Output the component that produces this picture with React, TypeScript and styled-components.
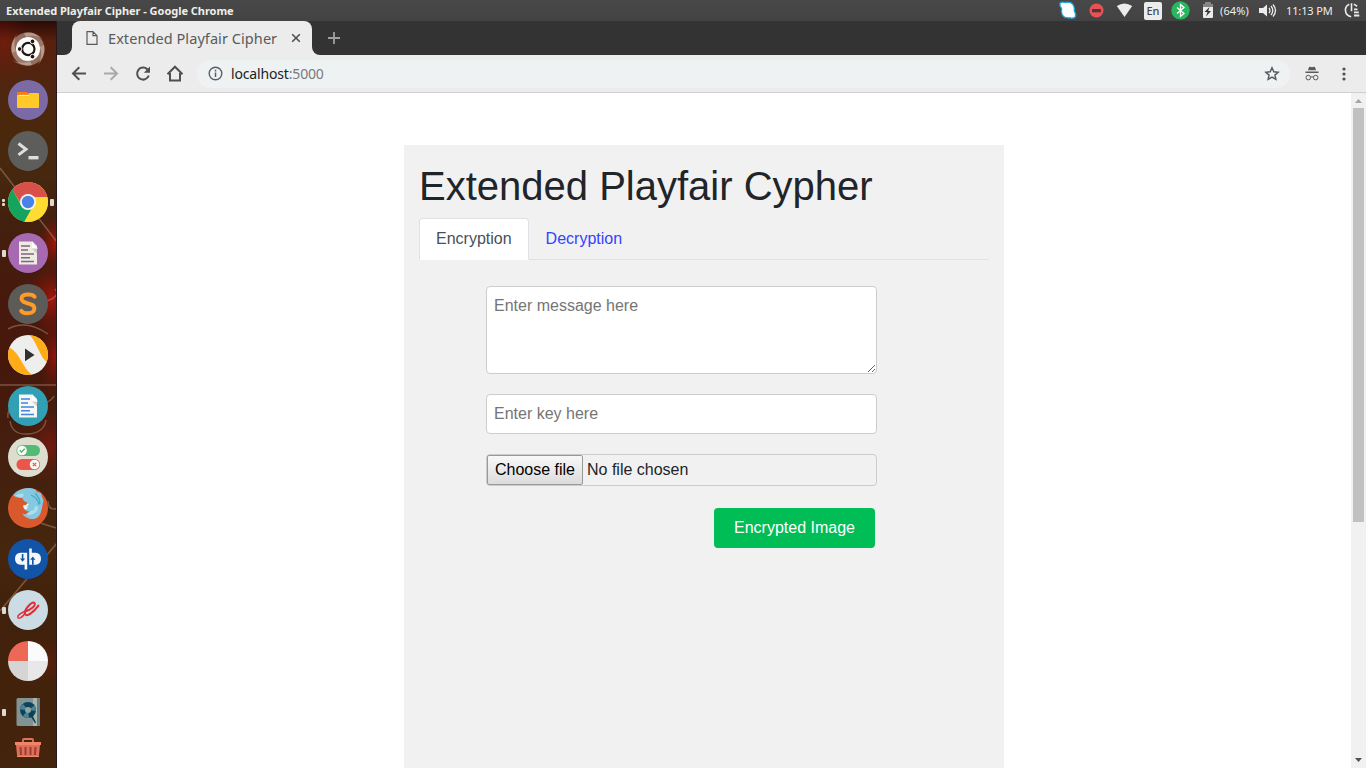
import React from "react";
import styled, { createGlobalStyle } from "styled-components";

const GlobalStyle = createGlobalStyle`
  * { box-sizing: border-box; }
  body { margin: 0; background: #fff; overflow: hidden; }
  button, input, textarea { font-family: "Liberation Sans", Arial, sans-serif; }
`;

const UI_FONT = `"Noto Sans", "Open Sans", sans-serif`;

const Desktop = styled.div`
  display: flex;
  flex-direction: column;
  width: 1366px;
  height: 768px;
  overflow: hidden;
  font-family: ${UI_FONT};
`;

const TopBar = styled.header`
  display: flex;
  justify-content: space-between;
  flex: 0 0 21px;
  height: 21px;
  padding-left: 6px;
  background: linear-gradient(#484848, #434343);
`;

const WindowTitle = styled.span`
  font-size: 11px;
  font-weight: 700;
  line-height: 22px;
  letter-spacing: -0.03px;
  color: #eeeeea;
  white-space: nowrap;
`;

const Indicators = styled.div`
  display: flex;
  align-items: center;
  width: 308px;
`;

const TraySlot = styled.div<{ $w: number }>`
  display: flex;
  align-items: center;
  flex: 0 0 ${(p) => p.$w}px;
  height: 21px;
`;

const TrayText = styled.span<{ $spacing: number }>`
  font-size: 11px;
  line-height: 21px;
  letter-spacing: ${(p) => p.$spacing}px;
  color: #eeeeea;
  white-space: nowrap;
`;

const LanguageBadge = styled.span`
  width: 18px;
  height: 18px;
  border-radius: 2px;
  background: #ececec;
  color: #444;
  font-size: 11px;
  font-weight: 500;
  line-height: 18px;
  text-align: center;
`;

const Workspace = styled.div`
  display: flex;
  flex: 1;
  min-height: 0;
`;

const Launcher = styled.nav`
  position: relative;
  flex: 0 0 57px;
  overflow: hidden;
  background: linear-gradient(
    #2a0b06 0, #58200d 20px, #4f2610 65px, #4a280b 110px, #46270f 155px, #431f0e 210px,
    #48180c 290px, #46180c 350px, #43200f 440px, #46260d 530px, #41210b 600px, #44240c 747px
  );
`;

const Wallpaper = styled.svg`
  position: absolute;
  inset: 0;
`;

const LauncherList = styled.div`
  position: relative;
  display: flex;
  flex-direction: column;
  gap: 11px;
  padding-top: 8px;
`;

const LauncherItem = styled.div<{ $h?: number; $pull?: number }>`
  display: grid;
  grid-template-columns: 8px 40px 9px;
  align-items: center;
  height: ${(p) => p.$h ?? 40}px;
  margin-top: ${(p) => p.$pull ?? 0}px;
`;

const RunningMarks = styled.div`
  display: flex;
  flex-direction: column;
  gap: 1px;
  padding-left: 2px;
`;

const Mark = styled.span<{ $h: number }>`
  width: ${(p) => (p.$h > 3 ? 4 : 3)}px;
  height: ${(p) => p.$h}px;
  border-radius: 1px;
  background: #ddd9d3;
`;

const Browser = styled.main`
  display: flex;
  flex-direction: column;
  flex: 1;
  min-width: 0;
`;

const TabStrip = styled.div`
  display: flex;
  flex: 0 0 34px;
  padding-left: 7px;
  background: #333;
`;

const TabCurve = styled.svg`
  align-self: flex-end;
  display: block;
`;

const Tab = styled.div`
  display: flex;
  align-items: center;
  width: 240px;
  padding: 0 11px 0 14px;
  border-radius: 8px 8px 0 0;
  background: #ececec;
`;

const TabTitle = styled.span`
  flex: 1;
  margin-left: 10px;
  font-size: 14.5px;
  line-height: 33px;
  letter-spacing: 0.07px;
  color: #5a5a5a;
  white-space: nowrap;
`;

const NewTab = styled.div`
  display: flex;
  align-items: center;
  margin-left: 7px;
`;

const Toolbar = styled.div`
  display: flex;
  align-items: center;
  flex: 0 0 38px;
  padding: 0 17px 0 14px;
  border-bottom: 1px solid #cfcfcf;
  background: #ececec;
`;

const NavButtons = styled.div`
  display: flex;
  gap: 16px;
  margin-right: 13px;
`;

const AddressBar = styled.div`
  display: flex;
  align-items: center;
  flex: 1;
  height: 28px;
  padding: 0 10px 0 11px;
  border-radius: 14px;
  background: #eef2f3;
`;

const Url = styled.span`
  flex: 1;
  margin-left: 8px;
  font-size: 14px;
  line-height: 26px;
  letter-spacing: -0.16px;
  color: #222;
`;

const Port = styled.span`
  color: #777b7e;
`;

const ToolbarActions = styled.div`
  display: flex;
  align-items: center;
  gap: 16px;
  margin-left: 14px;
`;

const Viewport = styled.div`
  display: flex;
  flex: 1;
  min-height: 0;
  background: #fff;
  font-family: "Liberation Sans", Arial, sans-serif;
`;

const Page = styled.div`
  flex: 1;
  display: flex;
  justify-content: center;
  padding-top: 52px;
  overflow: hidden;
`;

const Panel = styled.section`
  width: 600px;
  height: 900px;
  padding: 17px 15px;
  background: #f1f1f1;
`;

const Heading = styled.h1`
  margin: 0 0 8px;
  font-size: 40px;
  font-weight: 400;
  line-height: 48px;
  color: #212529;
`;

const Tabs = styled.div`
  display: flex;
  height: 42px;
  border-bottom: 1px solid #dee2e6;
`;

const TabLink = styled.a<{ $active?: boolean }>`
  height: 42px;
  padding: 8px 16px;
  border: 1px solid ${(p) => (p.$active ? "#dee2e6" : "transparent")};
  border-bottom-color: ${(p) => (p.$active ? "#fff" : "transparent")};
  border-radius: 4px 4px 0 0;
  background: ${(p) => (p.$active ? "#fff" : "transparent")};
  color: ${(p) => (p.$active ? "#495057" : "#3344fb")};
  font-size: 16px;
  line-height: 24px;
`;

const Form = styled.form`
  display: flex;
  flex-direction: column;
  gap: 20px;
  width: 391px;
  margin: 26px 0 0 67px;
`;

const MessageBox = styled.textarea`
  display: block;
  width: 100%;
  height: 88px;
  padding: 7px;
  border: 1px solid #ccc;
  border-radius: 4px;
  background: #fff;
  font-size: 16px;
  line-height: 24px;
  resize: vertical;
  &::placeholder { color: #757575; }
`;

const KeyInput = styled.input`
  height: 40px;
  padding: 0 7px;
  border: 1px solid #ccc;
  border-radius: 4px;
  background: #fff;
  font-size: 16px;
  &::placeholder { color: #757575; }
`;

const FilePicker = styled.div`
  display: flex;
  height: 32px;
  border: 1px solid #ccc;
  border-radius: 4px;
  color: #212529;
  font-size: 16px;
  line-height: 29px;
`;

const ChooseButton = styled.button`
  width: 96px;
  height: 30px;
  margin-right: 4px;
  padding: 0 0 1px;
  border: 1px solid #999;
  border-radius: 2px;
  background: linear-gradient(#f8f8f8, #dcdcdc);
  color: #000;
  font-size: 16px;
  white-space: nowrap;
`;

const SubmitButton = styled.button`
  align-self: flex-end;
  width: 161px;
  height: 40px;
  margin: 2px 2px 0 0;
  padding: 0 0 1px;
  border: 0;
  border-radius: 4px;
  background: #00bd56;
  color: #fff;
  font-size: 16px;
`;

const Scrollbar = styled.div`
  display: flex;
  flex-direction: column;
  align-items: center;
  flex: 0 0 15px;
  background: #f1f1f1;
`;

const Thumb = styled.div`
  width: 11px;
  height: 414px;
  margin-bottom: auto;
  background: #c1c1c1;
`;

const ScrollArrow = styled.svg`
  display: block;
  flex: 0 0 15px;
`;

const Disc = ({ fill, children }: { fill: string; children?: React.ReactNode }) => (
  <svg width="40" height="40" viewBox="0 0 40 40">
    <circle cx="20" cy="20" r="20" fill={fill} />
    {children}
    <path d="M1.5 27.5a20 20 0 0 0 37 0a19.4 19.4 0 0 1-37 0Z" fill="#000" opacity=".22" />
  </svg>
);

const UbuntuIcon = () => (
  <svg width="40" height="40" viewBox="0 0 40 40">
    <g fill="#ead8cc">
      <path d="M4 24C0 7 20-4 35 10C22 2 8 10 8 22Z" opacity=".36" />
      <path d="M16 4C33 0 44 20 30 36C38 22 30 9 18 8Z" opacity=".42" />
      <path d="M36 16C40 33 20 44 4 31C18 38 31 31 32 18Z" opacity=".36" />
      <path d="M24 36C7 40-4 20 9 5C2 18 10 31 22 32Z" opacity=".42" />
      <circle cx="20" cy="20" r="17" opacity=".1" />
    </g>
    <circle cx="20" cy="20" r="12" fill="#fff" />
    <circle cx="20.3" cy="20" r="6.2" fill="none" stroke="#241511" strokeWidth="2.2" />
    <g stroke="#fff" strokeWidth=".9" fill="#241511">
      <circle cx="11.6" cy="20" r="2.3" />
      <circle cx="24.5" cy="12.4" r="2.3" />
      <circle cx="24.5" cy="27.6" r="2.3" />
    </g>
  </svg>
);

const FilesIcon = () => (
  <Disc fill="#7b6aa5">
    <path d="M9 14V13q0-1 1-1h9l2 2v3H9Z" fill="#f57c16" />
    <path d="M9 15h11l1.5-2H30q1 0 1 1v13q0 1-1 1H10q-1 0-1-1Z" fill="#ffc928" />
    <path d="M11 15.4h9.5" stroke="#fff2c4" />
  </Disc>
);

const TerminalIcon = () => (
  <Disc fill="#5d5e5c">
    <path d="m10.5 12.5 7.5 5.7-7.5 5.7" fill="none" stroke="#dededb" strokeWidth="3" />
    <path d="M20.5 25h10v3.4h-10Z" fill="#dededb" />
  </Disc>
);

const ChromeIcon = () => (
  <Disc fill="#ffdb2d">
    <path d="M20 20V15H39.3A20 20 0 0 0 4.3 7.6L12.5 21Z" fill="#d9504a" />
    <path d="M4.5 7.4A20 20 0 0 0 16.5 39.7L24 26L13 23Z" fill="#14a45f" />
    <path d="M20 15H39.3A20 20 0 0 1 16.3 39.7L26 23Z" fill="#ffdc31" />
    <circle cx="20" cy="20" r="8" fill="#f4f4f4" />
    <circle cx="20" cy="20" r="6.2" fill="#4a83e5" />
  </Disc>
);

const DocumentIcon = ({ disc, line, paper }: { disc: string; line: string; paper: string }) => (
  <Disc fill={disc}>
    <path d="M11 8.5h13.5l4.5 4.5V31.5H11Z" fill={paper} />
    <path d="m24 8.5 6 7h-5q-1 0-1-1Z" fill="#fff" />
    <path d="m24 15.5h5v5Z" fill="#6d6d78" opacity=".25" />
    <path d="M13 13h9M13 17h7M13 21h13M13 24.8h9M13 28.5h13" stroke={line} strokeWidth="1.4" />
  </Disc>
);

const EditorIcon = () => (
  <Disc fill="#5d5b58">
    <path d="M26.6 12.8C24.6 9.7 13.6 9.2 13.5 14.7C13.4 20.6 26.6 18 26.4 24.5C26.3 30.5 15.4 30.1 13.2 26.8" fill="none" stroke="#ff9c29" strokeWidth="3.9" strokeLinecap="round" />
  </Disc>
);

const PlayerIcon = () => (
  <Disc fill="#eeeeed">
    <path d="M0.1 18A20 20 0 0 0 24 39.6C17 35 15 27 8.5 18.5Q5.5 14.5 1.4 12.5A20 20 0 0 0 .1 18Z" fill="#ffac16" />
    <path d="M22 .1A20 20 0 0 1 40 20q0 3-1.5 7C32 22 31 12 22 .1Z" fill="#ffac16" />
    <path d="M17 13.5 26.5 20 17 26.2Z" fill="#303030" />
  </Disc>
);

const TogglesIcon = () => (
  <Disc fill="#ddddd0">
    <rect x="8.5" y="8" width="23.5" height="11" rx="5.5" fill="#56ba77" />
    <rect x="8.5" y="22" width="23.5" height="11" rx="5.5" fill="#ec554a" />
    <circle cx="14" cy="13.5" r="4.8" fill="#fafaf5" />
    <circle cx="26.5" cy="27.5" r="4.8" fill="#fafaf5" />
    <path d="m11.8 13.3 1.7 1.8 3.2-3.3" fill="none" stroke="#49a968" strokeWidth="1.3" />
    <path d="m24.8 25.8 3.4 3.4m0-3.4-3.4 3.4" stroke="#e6574b" strokeWidth="1.2" />
  </Disc>
);

const FirefoxIcon = () => (
  <Disc fill="#da592c">
    <path d="M5.2 7A20 20 0 0 1 27 1.3L29 4L33 5L34 9L35.5 12L33.5 22C32 29 28 31.5 23.5 31C19 30.5 15.5 28 14.5 25.8C18 27 21 25 22.5 23.5C18 24 14.5 21 15.5 17C17 17.5 19 17 19.5 15C18 14 15 13 14.5 10C11 10 8 10 5.2 7Z" fill="#84c9df" />
    <path d="M7 7.5q6-3 9-1l-2 3q-4 0-7-2ZM22 23q5 0 5-5l3 1q0 5-5 7-4 2-7 0Z" fill="#c1e7ef" opacity=".7" />
    <path d="M23 7q7 3 8 10m-4-12q5 5 5 11" fill="none" stroke="#4aa9ca" strokeWidth="1.3" />
    <path d="M15.5 17c1.5.5 3.5 0 4-2l1.5 2-2 1 1 2-2.4 1.5q-2.6-1-2.1-4.5Z" fill="#e7f2ef" />
  </Disc>
);

const QbIcon = () => (
  <Disc fill="#1254a8">
    <g fill="#f5f7fa">
      <path d="M19.2 13.7H12.5Q7 14.3 7 19.7Q7 25.2 12.5 25.8H16.6V30.5H19.2Z" />
      <path d="M21.2 9.5H23.8V13.7H27.5Q33 14.3 33 19.7Q33 25.2 27.5 25.8H21.2Z" />
    </g>
    <path d="M15.4 15v4.6h1.8l-2.6 3.2-2.6-3.2h1.8V15ZM24 25.800v-5h-1.800l2.600-3.200 2.600 3.200h-1.800v5Z" fill="#1254a8" />
  </Disc>
);

const ReaderIcon = () => (
  <Disc fill="#ccdce4">
    <g fill="none" stroke="#e32b35" strokeLinecap="round">
      <path d="M16.5 21.4C22 21 28.5 15 26.5 12.9C24.2 11 15.2 20 17.2 24.3C19 27.4 26 21.8 30.4 15.6" strokeWidth="2" />
      <path d="M17 23.5C14 27.8 10.2 29.3 9.8 27.3C9.5 25 14 22.5 19 21" strokeWidth="1.4" />
    </g>
  </Disc>
);

const QuadrantIcon = () => (
  <svg width="40" height="40" viewBox="0 0 40 40">
    <path d="M20 20V0A20 20 0 0 0 0 20Z" fill="#ed6955" />
    <path d="M20 20V0A20 20 0 0 1 40 20Z" fill="#fbfbfb" />
    <path d="M20 20V40A20 20 0 0 1 0 20Z" fill="#d5d5d5" />
    <path d="M20 20V40A20 20 0 0 0 40 20Z" fill="#e8e8e8" />
  </svg>
);

const DiskIcon = () => (
  <svg width="40" height="40" viewBox="0 0 40 40">
    <rect x="8.5" y="6" width="23.5" height="28" rx="1.5" fill="#819493" />
    <path d="M25 6h4v28h-4Z" fill="#a9b5ab" />
    <path d="M29 6h3v28h-3Z" fill="#657c80" />
    <circle cx="20" cy="18" r="8" fill="#0c4459" />
    <path d="M20 18 12 17.5A8 8 0 0 1 15 12ZM20 18l6.5-4.5A8 8 0 0 1 28 19ZM20 18l-5 6a8 8 0 0 0 6 2Z" fill="#4b8496" />
    <circle cx="20" cy="18" r="3" fill="#91a4a3" />
    <path d="m21.5 22.5 2-1.5 4.5 9.5-1 .7Z" fill="#0c4055" />
  </svg>
);

const TrashIcon = () => (
  <svg width="40" height="20" viewBox="0 0 40 20">
    <path d="M15 4V2q0-1 1-1h8q1 0 1 1v2" fill="none" stroke="#dd755c" strokeWidth="1.8" />
    <path d="M7 4h26v3H7Z" fill="#f18368" />
    <path d="M8 7h24l-1.2 12H9.2Z" fill="#dc705a" />
    <path d="M12.5 9 13 17m4.5-8v8m5-8v8m5-8-.5 8" stroke="#9e3c33" strokeWidth="2" />
    <path d="M9 18.5h22" stroke="#f08669" />
  </svg>
);

const launcherItems: { icon: React.ReactNode; marks?: number; focused?: boolean }[] = [
  { icon: <UbuntuIcon /> },
  { icon: <FilesIcon /> },
  { icon: <TerminalIcon /> },
  { icon: <ChromeIcon />, marks: 2, focused: true },
  { icon: <DocumentIcon disc="#a769b2" line="#806482" paper="#eeece1" />, marks: 1 },
  { icon: <EditorIcon /> },
  { icon: <PlayerIcon /> },
  { icon: <DocumentIcon disc="#319fb4" line="#4285dc" paper="#f7f7f5" /> },
  { icon: <TogglesIcon /> },
  { icon: <FirefoxIcon /> },
  { icon: <QbIcon /> },
  { icon: <ReaderIcon />, marks: 1 },
  { icon: <QuadrantIcon /> },
  { icon: <DiskIcon />, marks: 1 },
];

const LauncherPanel = () => (
  <Launcher>
    <Wallpaper width="57" height="747" viewBox="0 0 57 747">
      <defs>
        <radialGradient id="ember">
          <stop offset="0" stopColor="#b5140c" stopOpacity=".85" />
          <stop offset="1" stopColor="#7a1408" stopOpacity="0" />
        </radialGradient>
      </defs>
      <ellipse cx="55" cy="222" rx="17" ry="28" fill="url(#ember)" />
      <ellipse cx="52" cy="278" rx="26" ry="36" fill="url(#ember)" />
      <ellipse cx="55" cy="335" rx="16" ry="40" fill="url(#ember)" opacity=".8" />
      <ellipse cx="4" cy="20" rx="26" ry="50" fill="url(#ember)" opacity=".3" />
      <ellipse cx="50" cy="425" rx="26" ry="40" fill="url(#ember)" opacity=".5" />
      <ellipse cx="45" cy="640" rx="34" ry="26" fill="url(#ember)" opacity=".25" />
      <g fill="none" stroke="#b08a70" strokeWidth="1.5" opacity=".5">
        <path d="M0 147 57 221" />
        <path d="M0 590 57 522M0 364h57M8 397q-2-15 20-14t26-8M22 268q4 20 30 10q8-5 3-10M8 308q18-10 40 5" />
        <path d="M10 400q2 14 18 13t18-14M48 480q0 8 6 8t4-7M34 500l22 7" />
      </g>
      <path d="M56.5 0v747" stroke="#26171c" />
    </Wallpaper>
    <LauncherList>
      {launcherItems.map(({ icon, marks = 0, focused }, i) => (
        <LauncherItem key={i}>
          <RunningMarks>
            {Array.from({ length: marks }, (_, n) => (
              <Mark key={n} $h={marks === 2 ? 3 : 7} />
            ))}
          </RunningMarks>
          {icon}
          {focused && (
            <RunningMarks>
              <Mark $h={7} />
            </RunningMarks>
          )}
        </LauncherItem>
      ))}
      <LauncherItem $h={20} $pull={-5}>
        <span />
        <TrashIcon />
      </LauncherItem>
    </LauncherList>
  </Launcher>
);

const Tray = () => (
  <Indicators>
    <TraySlot $w={31}>
      <svg width="20" height="21" viewBox="0 0 20 21">
        <path d="M1.9 3.2Q4 1.4 7 2.5Q13 1.2 15.2 4.800Q16.800 7.800 16.300 11Q18.500 14.500 17.300 17Q15 19 12 17.800Q6.500 18.500 4.400 15Q2.900 12 3.600 8.500Q1.400 6 1.900 3.200Z" fill="#fff" stroke="#1ca4dd" strokeWidth="1.3" />
      </svg>
    </TraySlot>
    <TraySlot $w={27}>
      <svg width="15" height="21" viewBox="0 0 15 21">
        <circle cx="7.5" cy="10.5" r="7" fill="#ed5052" />
        <path d="M3 9h9v3.3H3Z" fill="#463a3a" />
      </svg>
    </TraySlot>
    <TraySlot $w={28}>
      <svg width="17" height="21" viewBox="0 0 17 21">
        <path d="M.8 6Q8.5.8 16.2 6L8.5 17Z" fill="#ececec" />
      </svg>
    </TraySlot>
    <TraySlot $w={27}>
      <LanguageBadge>En</LanguageBadge>
    </TraySlot>
    <TraySlot $w={31}>
      <svg width="19" height="21" viewBox="0 0 19 21">
        <circle cx="9.5" cy="10.4" r="9.2" fill="#29b75e" />
        <path d="m6 7.4 7 6-3.5 3v-12l3.5 3-7 6" fill="none" stroke="#fff" strokeWidth="1.3" />
      </svg>
    </TraySlot>
    <TraySlot $w={18}>
      <svg width="12" height="21" viewBox="0 0 12 21">
        <path d="M1 5q0-1 1-1h1.5V2.5h5V4H10q1 0 1 1v12q0 1-1 1H2q-1 0-1-1Z" fill="#ececec" />
        <path d="M1 5q0-1 1-1h1.5V2.5h5V4H10q1 0 1 1v2H1Z" fill="#858585" />
        <path d="m7.5 7-5 5h3l-1.5 4.5 5-5.5H6.2Z" fill="#333" />
      </svg>
    </TraySlot>
    <TraySlot $w={38}>
      <TrayText $spacing={0.1}>(64%)</TrayText>
    </TraySlot>
    <TraySlot $w={28}>
      <svg width="19" height="21" viewBox="0 0 19 21">
        <path d="M1 8h4l4-3.5v12L5 13H1Z" fill="#ececec" />
        <path d="M11 7.8q2 2.7 0 5.4M13 6q3.5 4.5 0 9M15 4.5q5 6 0 12" fill="none" stroke="#ececec" strokeWidth="1.3" />
      </svg>
    </TraySlot>
    <TraySlot $w={57}>
      <TrayText $spacing={-0.12}>11:13 PM</TrayText>
    </TraySlot>
    <TraySlot $w={18}>
      <svg width="17" height="21" viewBox="0 0 17 21">
        <path d="M6.2 4.2A6.6 6.6 0 0 0 8.2 16.7M10.8 4.2q1.8.6 3.2 2.2M8.5 3.3v8" fill="none" stroke="#ececec" strokeWidth="1.6" />
        <path d="M11 9.3h3.5M11 12.3h4.8M11 15.5h5.3" stroke="#ececec" strokeWidth="1.8" />
      </svg>
    </TraySlot>
  </Indicators>
);

const BrowserToolbar = () => (
  <Toolbar>
    <NavButtons>
      <svg width="16" height="18" viewBox="0 0 16 18">
        <path d="M15 8.500H2m6.300-6.300L2 8.500l6.300 6.300" fill="none" stroke="#505050" strokeWidth="2" />
      </svg>
      <svg width="16" height="18" viewBox="0 0 16 18">
        <path d="M1 8.500h13M7.700 2.200 14 8.500l-6.300 6.300" fill="none" stroke="#a9a9a9" strokeWidth="2" />
      </svg>
      <svg width="16" height="18" viewBox="0 0 16 18">
        <path d="M13.8 10.500A6 6 0 1 1 12.300 4.300L14 6" fill="none" stroke="#505050" strokeWidth="2" />
        <path d="M15 1.500v6.200H8.800Z" fill="#505050" />
      </svg>
      <svg width="18" height="18" viewBox="0 0 18 18" style={{ marginLeft: -1 }}>
        <path d="M4 8V15.500h10V8M1.500 9.300 9 1.700l7.500 7.600" fill="none" stroke="#505050" strokeWidth="2" />
      </svg>
    </NavButtons>
    <AddressBar>
      <svg width="15" height="15" viewBox="0 0 15 15">
        <circle cx="7.5" cy="7.5" r="6.3" fill="none" stroke="#5c6063" strokeWidth="1.4" />
        <path d="M7.5 6.5V11M7.5 3.8v1.6" stroke="#5c6063" strokeWidth="1.5" />
      </svg>
      <Url>
        localhost<Port>:5000</Port>
      </Url>
      <svg width="16" height="16" viewBox="0 0 16 16">
        <path d="m8 1.8 1.8 4 4.4.4-3.3 2.9 1 4.3L8 11.1l-3.9 2.3 1-4.3-3.3-2.9 4.4-.4Z" fill="none" stroke="#54575b" strokeWidth="1.4" />
      </svg>
    </AddressBar>
    <ToolbarActions>
      <svg width="16" height="16" viewBox="0 0 16 16">
        <path d="M5 1Q6.5.5 8 1.2q1.5-.7 3-.2l1 3.2H4ZM1.5 5.5h13V7h-13Z" fill="#5b5b5b" />
        <g fill="none" stroke="#5b5b5b">
          <circle cx="4.3" cy="11.6" r="2.3" />
          <circle cx="11.7" cy="11.6" r="2.3" />
          <path d="M6.5 11.2q1.5-.8 3 0" />
        </g>
      </svg>
      <svg width="16" height="16" viewBox="0 0 16 16" style={{ marginRight: -3 }}>
        <g fill="#505050">
          <circle cx="8" cy="3" r="1.6" />
          <circle cx="8" cy="8" r="1.6" />
          <circle cx="8" cy="13" r="1.6" />
        </g>
      </svg>
    </ToolbarActions>
  </Toolbar>
);

export default function App() {
  return (
    <Desktop>
      <GlobalStyle />
      <TopBar>
        <WindowTitle>Extended Playfair Cipher - Google Chrome</WindowTitle>
        <Tray />
      </TopBar>
      <Workspace>
        <LauncherPanel />
        <Browser>
          <TabStrip>
            <TabCurve width="8" height="8" viewBox="0 0 8 8">
              <path d="M8 0v8H0A8 8 0 0 0 8 0Z" fill="#ececec" />
            </TabCurve>
            <Tab>
              <svg width="12" height="16" viewBox="0 0 12 16">
                <path d="M1 1.7h6l4 4v8.6H1ZM7 1.7v4h4" fill="none" stroke="#5a5a5a" strokeWidth="1.2" />
              </svg>
              <TabTitle>Extended Playfair Cipher</TabTitle>
              <svg width="10" height="10" viewBox="0 0 10 10">
                <path d="m1.2 1.2 7.6 7.6m0-7.6L1.2 8.8" stroke="#505050" strokeWidth="1.6" />
              </svg>
            </Tab>
            <TabCurve width="8" height="8" viewBox="0 0 8 8">
              <path d="M0 0v8h8A8 8 0 0 1 0 0Z" fill="#ececec" />
            </TabCurve>
            <NewTab>
              <svg width="14" height="14" viewBox="0 0 14 14">
                <path d="M7 1v12M1 7h12" stroke="#a0a0a0" strokeWidth="1.8" />
              </svg>
            </NewTab>
          </TabStrip>
          <BrowserToolbar />
          <Viewport>
            <Page>
              <Panel>
                <Heading>Extended Playfair Cypher</Heading>
                <Tabs>
                  <TabLink $active>Encryption</TabLink>
                  <TabLink>Decryption</TabLink>
                </Tabs>
                <Form>
                  <MessageBox placeholder="Enter message here" />
                  <KeyInput placeholder="Enter key here" />
                  <FilePicker>
                    <ChooseButton type="button">Choose file</ChooseButton>
                    No file chosen
                  </FilePicker>
                  <SubmitButton type="button">Encrypted Image</SubmitButton>
                </Form>
              </Panel>
            </Page>
            <Scrollbar>
              <ScrollArrow width="15" height="15" viewBox="0 0 15 15">
                <path d="M4 10h7L7.5 6Z" fill="#a3a3a3" />
              </ScrollArrow>
              <Thumb />
              <ScrollArrow width="15" height="15" viewBox="0 0 15 15">
                <path d="M4 5h7L7.5 9Z" fill="#505050" />
              </ScrollArrow>
            </Scrollbar>
          </Viewport>
        </Browser>
      </Workspace>
    </Desktop>
  );
}
